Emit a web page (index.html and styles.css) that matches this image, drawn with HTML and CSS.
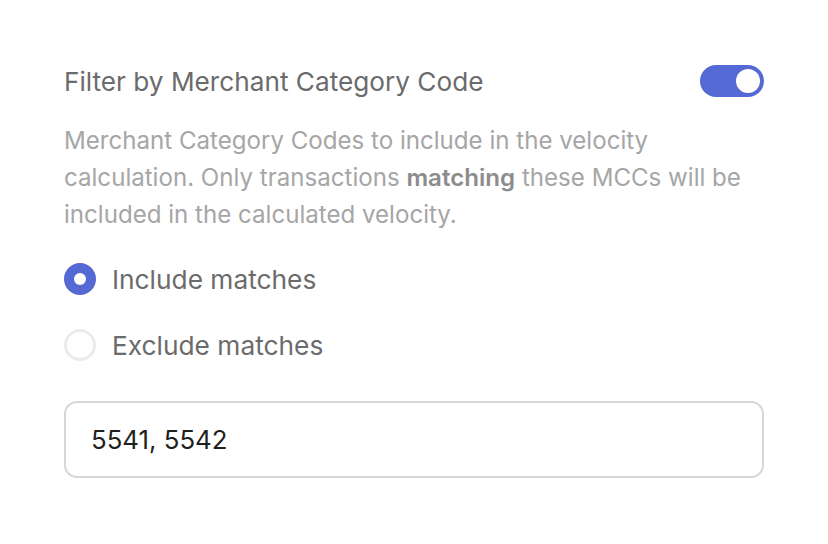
FILE: index.html
```html
<!DOCTYPE html>
<html>
<head>
<meta charset="utf-8">
<link rel="stylesheet" href="styles.css">
</head>
<body>
<div class="panel">
  <div class="header">
    <div class="title">Filter by Merchant Category Code</div>
    <div class="toggle"><div class="knob"></div></div>
  </div>
  <p class="desc">Merchant Category Codes to include in the velocity calculation. Only transactions <b>matching</b> these MCCs will be included in the calculated velocity.</p>
  <div class="options">
    <div class="option"><span class="radio checked"></span><span class="label">Include matches</span></div>
    <div class="option"><span class="radio"></span><span class="label">Exclude matches</span></div>
  </div>
  <div class="input">5541, 5542</div>
</div>
</body>
</html>
```
FILE: styles.css
```css
html, body { margin: 0; padding: 0; background: #ffffff; }
body { font-family: Inter, "Noto Sans", sans-serif; }
.panel { width: 700px; padding: 64px 0 0 64px; }
.header { display: flex; align-items: center; justify-content: space-between; height: 34px; }
.title { font-size: 26.2px; color: #6b6b6b; font-weight: 400; }
.toggle { width: 64px; height: 32px; border-radius: 16px; background: #5469d4; display: flex; align-items: center; justify-content: flex-end; padding: 0 4px; box-sizing: border-box; }
.knob { width: 24px; height: 24px; border-radius: 50%; background: #fff; }
.desc { margin: 24px 0 0 0; font-size: 24.1px; line-height: 37px; color: #a6a6a6; }
.desc b { font-weight: 600; color: #8c8c8c; }
.options { margin-top: 30px; display: flex; flex-direction: column; gap: 34px; }
.option { display: flex; align-items: center; gap: 16px; height: 32px; }
.radio { width: 32px; height: 32px; border-radius: 50%; box-sizing: border-box; border: 3px solid #ebebeb; background: #fff; flex: none; }
.radio.checked { border: 10px solid #5469d4; }
.label { font-size: 26.3px; color: #6b6b6b; font-weight: 400; }
.input { margin-top: 40px; height: 77px; box-sizing: border-box; border: 2px solid #d6d6d6; border-radius: 13px; padding: 0 25px; display: flex; align-items: center; font-size: 25.8px; color: #1f1f1f; }
```
